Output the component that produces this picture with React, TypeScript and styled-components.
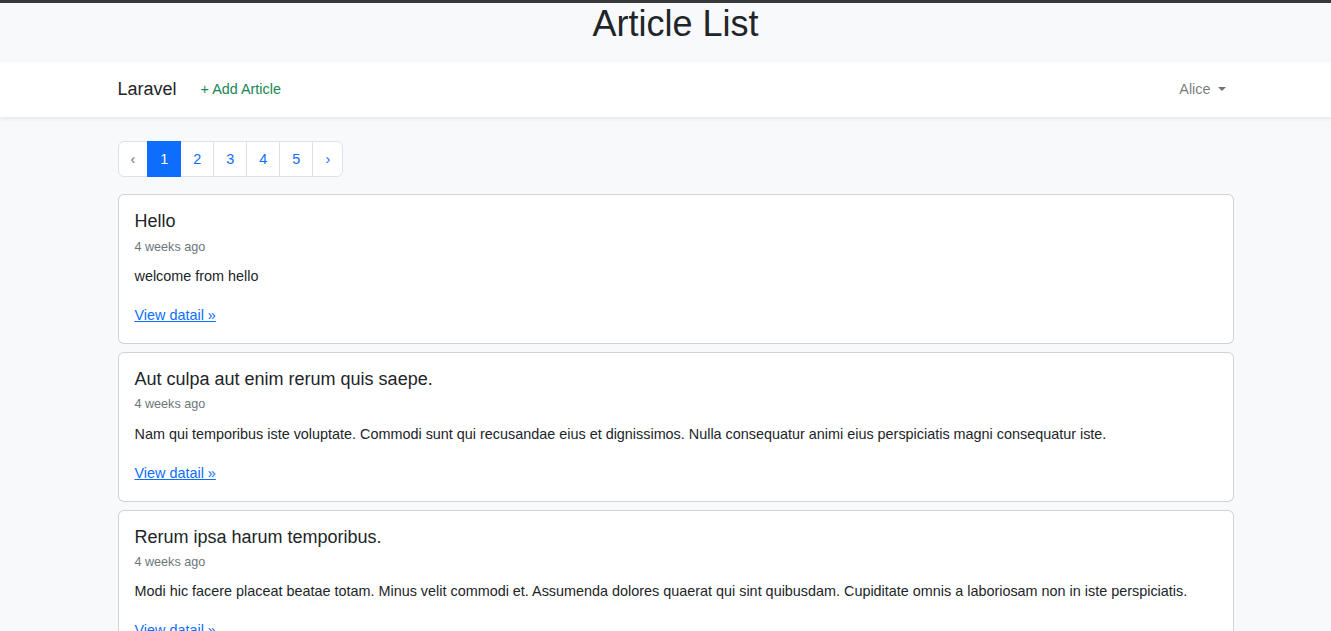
import styled, { createGlobalStyle } from "styled-components";

const GlobalStyle = createGlobalStyle`
  html, body {
    margin: 0;
    padding: 0;
    overflow-x: hidden;
  }
  body {
    background: #f8f9fa;
    color: #212529;
    font-family: "Liberation Sans", Arial, sans-serif;
    font-size: 14.4px;
    line-height: 1.6;
    border-top: 3px solid #383838;
  }
  * { box-sizing: border-box; }
`;

const Shell = styled.div`
  width: 1351px;
`;

const PageHeader = styled.header`
  height: 59px;
  padding-top: 3px;
  text-align: center;
`;

const Title = styled.h1`
  margin: 0;
  font-size: 36px;
  font-weight: 400;
  line-height: 1;
`;

const NavBar = styled.nav`
  background: #fff;
  box-shadow: 0 2px 4px rgba(0, 0, 0, 0.075);
  height: 55px;
  position: relative;
`;

const Container = styled.div`
  width: 1116px;
  margin: 0 auto;
`;

const NavInner = styled(Container)`
  height: 100%;
  display: flex;
  align-items: center;
`;

const Brand = styled.a`
  font-size: 18px;
  color: #212529;
  margin-right: 16px;
  text-decoration: none;
`;

const NavLink = styled.a<{ $tone?: "success" | "muted" }>`
  padding: 8px;
  font-size: 14.4px;
  text-decoration: none;
  color: ${(p) => (p.$tone === "success" ? "#198754" : "rgba(0, 0, 0, 0.55)")};
  display: flex;
  align-items: center;
`;

const Caret = styled.span`
  display: inline-block;
  margin-left: 7px;
  border-top: 0.3em solid currentColor;
  border-left: 0.3em solid transparent;
  border-right: 0.3em solid transparent;
  border-bottom: 0;
`;

const Spacer = styled.div`
  flex: 1;
`;

const Main = styled(Container)`
  padding-top: 24px;
`;

const Pagination = styled.ul`
  display: flex;
  list-style: none;
  margin: 0 0 17px;
  padding: 0;
`;

const PageItem = styled.li<{ $active?: boolean; $disabled?: boolean }>`
  padding: 8px 12px;
  font-size: 14.4px;
  line-height: 1.25;
  border: 1px solid ${(p) => (p.$active ? "#0d6efd" : "#dee2e6")};
  margin-left: -1px;
  background: ${(p) => (p.$active ? "#0d6efd" : "#fff")};
  color: ${(p) => (p.$active ? "#fff" : p.$disabled ? "#6c757d" : "#0d6efd")};
  position: relative;
  z-index: ${(p) => (p.$active ? 1 : 0)};

  &:first-child {
    margin-left: 0;
    border-radius: 6px 0 0 6px;
  }
  &:last-child {
    border-radius: 0 6px 6px 0;
  }
`;

const Card = styled.article`
  background: #fff;
  border: 1px solid rgba(0, 0, 0, 0.175);
  border-radius: 6px;
  padding: 16px;
  margin-bottom: 8px;
`;

const CardTitle = styled.h5`
  margin: 0 0 4px;
  font-size: 18px;
  font-weight: 500;
  line-height: 1.2;
`;

const CardMeta = styled.h6`
  margin: 0 0 8px;
  font-size: 12.6px;
  font-weight: 400;
  color: #6c757d;
  line-height: 1.6;
`;

const CardText = styled.p`
  margin: 0 0 16px;
`;

const DetailLink = styled.a`
  color: #0d6efd;
  text-decoration: underline;
`;

const articles = [
  { title: "Hello", body: "welcome from hello" },
  {
    title: "Aut culpa aut enim rerum quis saepe.",
    body: "Nam qui temporibus iste voluptate. Commodi sunt qui recusandae eius et dignissimos. Nulla consequatur animi eius perspiciatis magni consequatur iste.",
  },
  {
    title: "Rerum ipsa harum temporibus.",
    body: "Modi hic facere placeat beatae totam. Minus velit commodi et. Assumenda dolores quaerat qui sint quibusdam. Cupiditate omnis a laboriosam non in iste perspiciatis.",
  },
];

export default function App() {
  return (
    <Shell>
      <GlobalStyle />
      <PageHeader>
        <Title>Article List</Title>
      </PageHeader>
      <NavBar>
        <NavInner>
          <Brand href="#">Laravel</Brand>
          <NavLink href="#" $tone="success">+ Add Article</NavLink>
          <Spacer />
          <NavLink href="#" $tone="muted">
            Alice
            <Caret />
          </NavLink>
        </NavInner>
      </NavBar>
      <Main>
        <Pagination>
          <PageItem $disabled>‹</PageItem>
          <PageItem $active>1</PageItem>
          <PageItem>2</PageItem>
          <PageItem>3</PageItem>
          <PageItem>4</PageItem>
          <PageItem>5</PageItem>
          <PageItem>›</PageItem>
        </Pagination>
        {articles.map((a) => (
          <Card key={a.title}>
            <CardTitle>{a.title}</CardTitle>
            <CardMeta>4 weeks ago</CardMeta>
            <CardText>{a.body}</CardText>
            <DetailLink href="#">View datail »</DetailLink>
          </Card>
        ))}
      </Main>
    </Shell>
  );
}
